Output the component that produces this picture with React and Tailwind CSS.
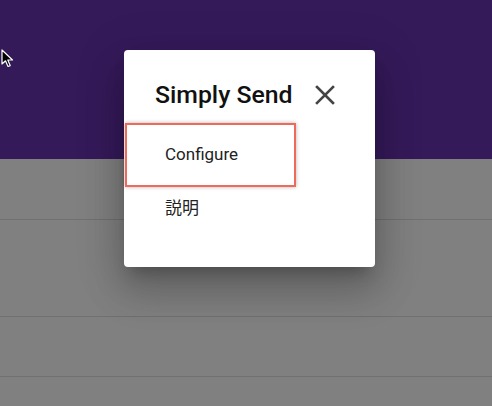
import React from 'react';

const Cursor = () => (
  <svg className="absolute left-[1px] top-[49px]" width="13" height="19" viewBox="0 0 13 19">
    <path d="M1 1 L1 15 L4.5 11.8 L7 17.5 L9.2 16.6 L6.8 11 L11.5 11 Z" fill="#000" stroke="#fff" strokeWidth="1.2" strokeLinejoin="round" />
  </svg>
);

const CloseIcon = () => (
  <svg width="20" height="20" viewBox="0 0 20 20" className="mt-[5px] shrink-0">
    <path d="M2 2 L18 18 M18 2 L2 18" stroke="#444" strokeWidth="2.6" strokeLinecap="square" />
  </svg>
);

export default function App() {
  return (
    <div className="relative h-[406px] w-[492px] overflow-hidden bg-[#808080] font-['Roboto','Noto_Sans_CJK_JP',sans-serif]">
      <div className="h-[159px] bg-[#351a5a]" />
      <div className="flex flex-col">
        <div className="h-[61px] border-b border-[#707070]" />
        <div className="h-[97px] border-b border-[#707070]" />
        <div className="h-[60px] border-b border-[#707070]" />
      </div>

      <Cursor />

      <div className="absolute left-[124px] top-[50px] flex h-[217px] w-[251px] flex-col rounded-[4px] bg-white shadow-[0_11px_15px_-7px_rgba(0,0,0,0.25),0_24px_38px_3px_rgba(0,0,0,0.16),0_9px_46px_8px_rgba(0,0,0,0.12)]">
        <div className="flex items-start gap-[22px] pl-[31px] pt-[30px]">
          <h2 className="text-[24.8px] leading-[29px] font-medium text-[#111]">Simply Send</h2>
          <CloseIcon />
        </div>
        <div className="ml-[1px] mt-[14px] flex h-[64px] w-[171px] items-center border-2 border-[#ef6a5b] pl-[38px] text-[17px] text-[#222] shadow-[0_0_4px_rgba(0,0,0,0.3)]">
          Configure
        </div>
        <div className="mt-[8px] pl-[41px] text-[17px] leading-[26px] text-[#222]">説明</div>
      </div>
    </div>
  );
}
